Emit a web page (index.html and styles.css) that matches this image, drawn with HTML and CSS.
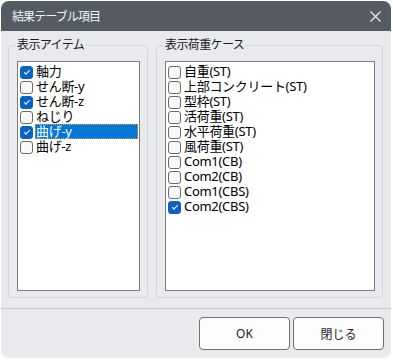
FILE: index.html
```html
<!DOCTYPE html>
<html lang="ja">
<head>
    <meta charset="UTF-8">
    <title>結果テーブル項目</title>
    <link rel="stylesheet" href="styles.css">
</head>
<body>
    <div class="window">
        <div class="titlebar">
            <span class="title">結果テーブル項目</span>
            <svg class="close" width="11" height="11" viewBox="0 0 11 11">
                <path d="M0.5 0.5 L10.5 10.5 M10.5 0.5 L0.5 10.5" stroke="#f2f2f2" stroke-width="1.1" fill="none"/>
            </svg>
        </div>
        <div class="content">
            <fieldset class="group group-items">
                <legend>表示アイテム</legend>
                <div class="list">
                    <div class="row"><span class="cb checked"></span><span class="label">軸力</span></div>
                    <div class="row"><span class="cb"></span><span class="label">せん断-y</span></div>
                    <div class="row"><span class="cb checked"></span><span class="label">せん断-z</span></div>
                    <div class="row"><span class="cb"></span><span class="label">ねじり</span></div>
                    <div class="row"><span class="cb checked"></span><span class="label selected">曲げ-y</span></div>
                    <div class="row"><span class="cb"></span><span class="label">曲げ-z</span></div>
                </div>
            </fieldset>
            <fieldset class="group group-cases">
                <legend>表示荷重ケース</legend>
                <div class="list">
                    <div class="row"><span class="cb"></span><span class="label">自重(ST)</span></div>
                    <div class="row"><span class="cb"></span><span class="label">上部コンクリート(ST)</span></div>
                    <div class="row"><span class="cb"></span><span class="label">型枠(ST)</span></div>
                    <div class="row"><span class="cb"></span><span class="label">活荷重(ST)</span></div>
                    <div class="row"><span class="cb"></span><span class="label">水平荷重(ST)</span></div>
                    <div class="row"><span class="cb"></span><span class="label">風荷重(ST)</span></div>
                    <div class="row"><span class="cb"></span><span class="label">Com1(CB)</span></div>
                    <div class="row"><span class="cb"></span><span class="label">Com2(CB)</span></div>
                    <div class="row"><span class="cb"></span><span class="label">Com1(CBS)</span></div>
                    <div class="row"><span class="cb checked"></span><span class="label">Com2(CBS)</span></div>
                </div>
            </fieldset>
        </div>
        <div class="footer">
            <button class="btn">OK</button>
            <button class="btn">閉じる</button>
        </div>
    </div>
</body>
</html>
```

FILE: styles.css
```css
:root {
    --title-bg: #555b63;
    --window-bg: #e9eaee;
    --group-border: #d2d4d9;
    --list-border: #7c7d80;
    --check-blue: #0b62c4;
    --select-blue: #0078d7;
}

body {
    margin: 0;
    background-color: #ffffff;
    font-family: "Noto Sans", "Noto Sans CJK JP", sans-serif;
    font-size: 12px;
    color: #000;
}

.window {
    width: 390px;
    height: 357px;
    margin: 1px 0 0 1px;
    background-color: var(--window-bg);
    border-radius: 8px;
    overflow: hidden;
    display: flex;
    flex-direction: column;
}

.titlebar {
    height: 30px;
    flex: none;
    background-color: var(--title-bg);
    display: flex;
    align-items: center;
    justify-content: space-between;
    padding: 0 10px 0 11px;
}

.title {
    color: #f3f3f3;
    font-size: 12px;
    letter-spacing: -0.9px;
}

.close {
    display: block;
}

.content {
    display: flex;
    gap: 8px;
    padding: 6px 7px 10px 7px;
    border-bottom: 1px solid #c9cacd;
}

.group {
    margin: 0;
    border: 1px solid var(--group-border);
    border-radius: 4px;
    padding: 8px 7px 6px 8px;
    min-width: 0;
}

.group-items {
    width: 123px;
}

.group-cases {
    width: 210px;
}

.group legend {
    padding: 0 2px;
    margin-left: -2px;
    font-size: 12px;
    line-height: 16px;
    color: #1a1a1a;
    letter-spacing: -0.6px;
}

.list {
    height: 226px;
    background-color: #fff;
    border: 1px solid var(--list-border);
    padding: 2px 1px 0 2px;
}

.row {
    height: 15px;
    display: flex;
    align-items: center;
    gap: 2px;
    white-space: nowrap;
}

.cb {
    position: relative;
    flex: none;
    width: 11px;
    height: 11px;
    margin-top: 2px;
    border: 1px solid #6a6a6a;
    border-radius: 3px;
    background-color: #f9f9f9;
}

.cb.checked {
    background-color: var(--check-blue);
    border-color: var(--check-blue);
}

.cb.checked::after {
    content: "";
    position: absolute;
    left: 3px;
    top: 3px;
    width: 5px;
    height: 2px;
    border-left: 1px solid #fff;
    border-bottom: 1px solid #fff;
    transform: rotate(-45deg);
}

.label {
    flex: 1;
    height: 15px;
    padding: 0 1px;
    font-size: 13px;
    line-height: 15px;
    letter-spacing: -0.3px;
}

.label.selected {
    background-color: var(--select-blue);
    color: #fff;
    outline: 1px dotted #f0a23a;
    outline-offset: -1px;
}

.footer {
    display: flex;
    justify-content: flex-end;
    gap: 3px;
    padding: 8px 7px 0 0;
}

.btn {
    width: 91px;
    height: 33px;
    background-color: #fdfdfd;
    border: 1px solid #707070;
    border-radius: 4px;
    font-family: "Noto Sans", "Noto Sans CJK JP", sans-serif;
    font-size: 12px;
    color: #222;
    cursor: pointer;
}
```
